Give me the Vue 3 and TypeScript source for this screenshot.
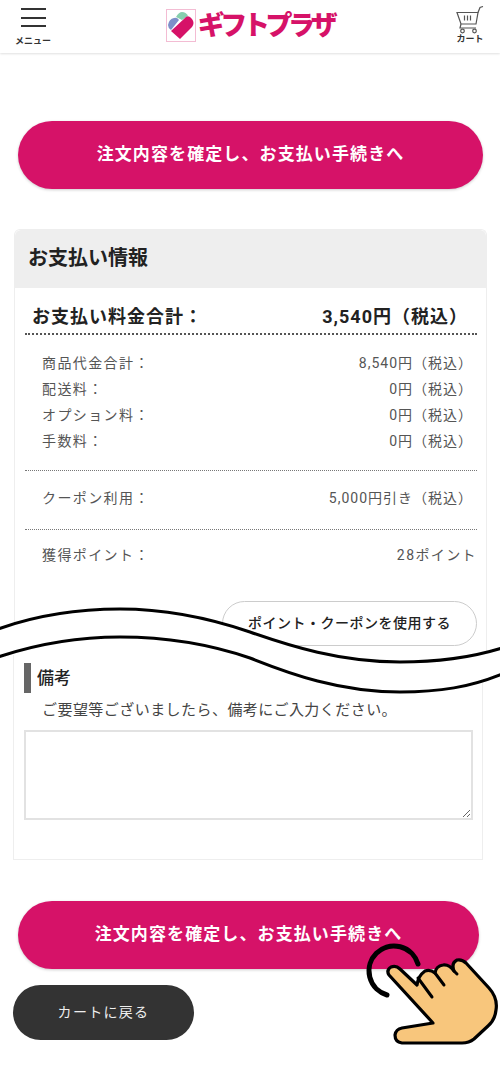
<template>
  <div class="page">
    <!-- Header -->
    <header class="header">
      <div class="menu-btn">
        <div class="bars"><i></i><i></i><i></i></div>
        <span class="icon-label menu-label">メニュー</span>
      </div>
      <div class="logo">
        <svg class="logo-mark" width="30" height="33" viewBox="0 0 30 33">
          <rect x="0.5" y="0.5" width="29" height="32" fill="#fff" stroke="#f3bcd3" />
          <path d="M10 8 Q13 3 16 3 Q20 3 22 7 L16 11 Z" fill="#86cfae" />
          <path d="M2 16 Q3 10 8 9 Q11 8 13 11 L5 21 Q2 19 2 16 Z" fill="#7d8fc9" />
          <path d="M5 22 L20 8 Q23 6 26 10 Q29 14 26 18 L14 30 Z" fill="#d61268" />
        </svg>
        <span class="logo-text">ギフトプラザ</span>
      </div>
      <div class="cart-btn">
        <svg width="28" height="28" viewBox="0 0 28 28" fill="none" stroke="#555" stroke-width="1.2">
          <path d="M1 6.5 H22 L20 18 H5 Z" />
          <path d="M22 6.5 L24 1.5 L27 0.5" />
          <path d="M5 18 L4 22 H20" />
          <path d="M8.5 9.5 V14.5 M11.5 9.5 V14.5 M14.5 9.5 V14.5" />
          <circle cx="6.5" cy="25" r="1.8" />
          <circle cx="18.5" cy="25" r="1.8" />
        </svg>
        <span class="icon-label">カート</span>
      </div>
    </header>

    <main class="content">
      <button class="primary-btn top-btn">注文内容を確定し、お支払い手続きへ</button>

      <section class="pay-card">
        <h2 class="pay-title">お支払い情報</h2>

        <div class="total-row">
          <span>お支払い料金合計：</span>
          <span>3,540円（税込）</span>
        </div>

        <div class="detail-group">
          <div v-for="row in charges" :key="row.label" class="detail-row">
            <span>{{ row.label }}</span>
            <span class="detail-value">{{ row.value }}</span>
          </div>
        </div>

        <div class="detail-group coupon-group">
          <div class="detail-row">
            <span>クーポン利用：</span>
            <span class="detail-value">5,000円引き（税込）</span>
          </div>
        </div>

        <div class="points-row">
          <span>獲得ポイント：</span>
          <span>28ポイント</span>
        </div>

        <div class="coupon-action">
          <button class="outline-btn">ポイント・クーポンを使用する</button>
        </div>
      </section>

      <section class="note-card">
        <h3 class="note-title">備考</h3>
        <p class="note-help">ご要望等ございましたら、備考にご入力ください。</p>
        <textarea class="note-input"></textarea>
      </section>

      <button class="primary-btn bottom-btn">注文内容を確定し、お支払い手続きへ</button>
      <button class="back-btn">カートに戻る</button>
    </main>

    <!-- wavy cut through the screenshot -->
    <svg class="wave" width="500" height="130" viewBox="0 0 500 130" fill="none">
      <path d="M-2 39 C40 24 80 19 120 19 C170 19 215 30 250 42 C290 56 340 72 400 72 C440 72 470 68 502 58 L502 84 C470 97 440 102 400 102 C340 102 290 84 250 68 C215 56 170 47 120 47 C80 47 40 53 -2 67 Z" fill="#fff" />
      <path d="M-2 39 C40 24 80 19 120 19 C170 19 215 30 250 42 C290 56 340 72 400 72 C440 72 470 68 502 58" stroke="#000" stroke-width="3" />
      <path d="M-2 67 C40 53 80 47 120 47 C170 47 215 56 250 68 C290 84 340 102 400 102 C440 102 470 97 502 84" stroke="#000" stroke-width="3" />
    </svg>

    <!-- tapping hand -->
    <svg class="hand" width="160" height="120" viewBox="0 0 160 120" fill="none">
      <path d="M78 34 A25 25 0 1 0 47 65" stroke="#000" stroke-width="5" stroke-linecap="round" />
      <path d="M49 45 Q46 40 51 37 Q56 35 60 39 L77 55 Q78 46 85 41 Q90 39 95 43 Q96 36 103 35 Q109 34 114 41 Q111 33 117 30 Q122 29 126 33 L149 58 Q158 68 156 80 Q155 90 148 96 L134 109 Q129 113 122 113 L62 113 Q55 112 55 105 Q56 99 62 98 L93 93 Z" fill="#f8c67c" stroke="#000" stroke-width="3.2" stroke-linejoin="round" />
      <path d="M78 48 L92 67 M95 43 L104 55 M114 41 L117 44" stroke="#000" stroke-width="3" stroke-linecap="round" />
    </svg>
  </div>
</template>

<script setup lang="ts">
const charges = [
  { label: '商品代金合計：', value: '8,540円（税込）' },
  { label: '配送料：', value: '0円（税込）' },
  { label: 'オプション料：', value: '0円（税込）' },
  { label: '手数料：', value: '0円（税込）' },
];
</script>

<style>
html, body { margin: 0; background: #fff; }
</style>

<style scoped>
.page {
  position: relative;
  width: 500px;
  height: 1080px;
  overflow: hidden;
  background: #fff;
  color: #333;
  font-family: Roboto, "Noto Sans CJK JP", sans-serif;
}
.header {
  height: 53px;
  display: flex;
  justify-content: space-between;
  align-items: flex-start;
  box-sizing: border-box;
  padding: 8px 16px 0 15px;
  box-shadow: 0 1px 2px rgba(0, 0, 0, 0.12);
}
.menu-btn { width: 36px; display: flex; flex-direction: column; align-items: center; }
.bars { width: 25px; height: 19px; display: flex; flex-direction: column; justify-content: space-between; }
.bars i { display: block; height: 2px; background: #333; }
.icon-label { font-size: 9px; line-height: 10px; font-weight: 700; color: #333; }
.menu-label { margin-top: 9px; }
.cart-btn { display: flex; flex-direction: column; align-items: center; margin-top: -2px; }
.logo { display: flex; align-items: center; gap: 2px; margin: 1px 0 0 -8px; }
.logo-text { font-size: 27px; line-height: 32px; font-weight: 900; color: #d61268; letter-spacing: -4.4px; }
.content { padding: 68px 0 0 14px; }
button { font-family: inherit; cursor: pointer; }
.primary-btn {
  display: block;
  height: 68px;
  padding: 0 0 5px;
  margin-left: 4px;
  border: 0;
  border-radius: 34px;
  background: #d61268;
  color: #fff;
  font-size: 17px;
  font-weight: 700;
  letter-spacing: 1.1px;
  box-shadow: 0 1px 3px rgba(0, 0, 0, 0.2);
}
.top-btn { width: 465px; }
.bottom-btn { width: 461px; margin-top: 41px; }
.pay-card {
  margin-top: 40px;
  width: 473px;
  box-sizing: border-box;
  border: 1px solid #eee;
  border-bottom: 0;
  border-radius: 6px 6px 0 0;
}
.pay-title {
  margin: 0;
  height: 58px;
  padding-left: 13px;
  background: #eee;
  border-radius: 6px 6px 0 0;
  font-size: 20px;
  line-height: 56px;
  font-weight: 700;
  color: #222;
}
.total-row {
  display: flex;
  justify-content: space-between;
  margin-left: 10px;
  width: 452px;
  box-sizing: border-box;
  height: 47px;
  padding: 0 9px 0 7px;
  line-height: 58px;
  font-size: 18px;
  font-weight: 700;
  letter-spacing: 1px;
  color: #222;
  border-bottom: 2px dotted #555;
}
.detail-group {
  margin-left: 10px;
  width: 452px;
  box-sizing: border-box;
  padding: 15px 0 16px 17px;
  border-bottom: 1px dotted #777;
}
.coupon-group { padding: 14px 0 18px 17px; }
.detail-row {
  display: flex;
  justify-content: space-between;
  padding-right: 4px;
  font-size: 14px;
  line-height: 26px;
  letter-spacing: 1.4px;
  color: #555;
}
.detail-value { letter-spacing: 1px; }
.points-row {
  display: flex;
  justify-content: space-between;
  margin-left: 27px;
  width: 435px;
  padding-top: 12px;
  font-size: 14px;
  line-height: 26px;
  letter-spacing: 1.4px;
  color: #555;
}
.coupon-action { display: flex; justify-content: flex-end; width: 462px; padding: 33px 0 5px; }
.outline-btn {
  width: 255px;
  height: 45px;
  padding: 0 0 3px;
  border: 1px solid #ccc;
  border-radius: 23px;
  background: #fff;
  color: #222;
  font-size: 14px;
  font-weight: 500;
  letter-spacing: 0.5px;
}
.note-card {
  margin: 4px 0 0 -1px;
  width: 470px;
  box-sizing: border-box;
  padding: 8px 0 39px 10px;
  border: 1px solid #eee;
  border-top: 0;
}
.note-title {
  margin: 0;
  border-left: 7px solid #666;
  padding-left: 6px;
  font-size: 17px;
  line-height: 30px;
  font-weight: 500;
  color: #222;
}
.note-help {
  margin: 5px 0 8px 18px;
  font-size: 15px;
  line-height: 24px;
  letter-spacing: 0.45px;
  color: #444;
}
.note-input {
  display: block;
  width: 449px;
  height: 90px;
  box-sizing: border-box;
  border: 2px solid #e2e2e2;
  background: #fff;
}
.back-btn {
  display: block;
  width: 181px;
  height: 55px;
  margin: 16px 0 0 -1px;
  padding: 0 0 3px;
  border: 0;
  border-radius: 28px;
  background: #333;
  color: #eee;
  font-size: 14px;
  letter-spacing: 1.3px;
}
.wave { position: absolute; left: 0; top: 590px; }
.hand { position: absolute; left: 340px; top: 930px; }
</style>
